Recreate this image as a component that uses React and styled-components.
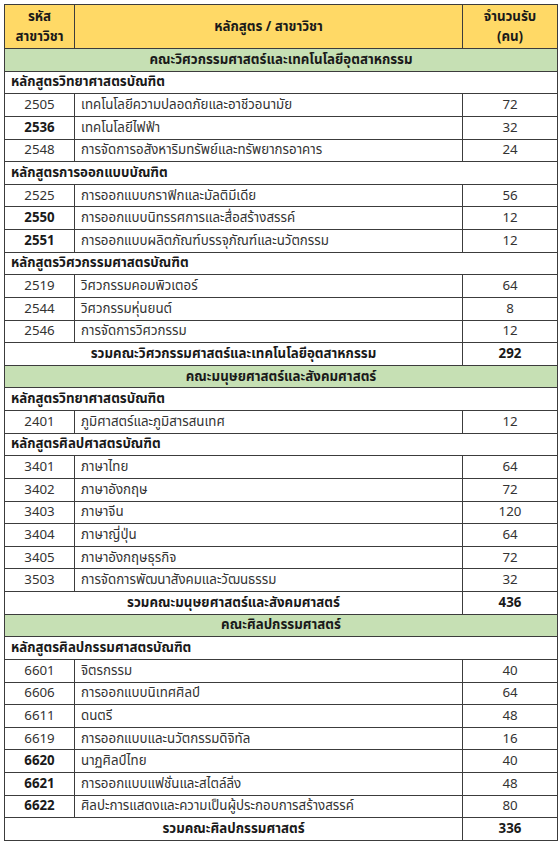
import React from "react";
import styled, { createGlobalStyle } from "styled-components";

const Global = createGlobalStyle`
  html, body { margin: 0; padding: 0; background: #ffffff; }
  body {
    font-family: Tahoma, "Noto Sans Thai", "Noto Sans", "DejaVu Sans", sans-serif;
    font-size: 13.3px;
    line-height: 18px;
    color: #333333;
  }
`;

const Page = styled.div`
  padding: 4px 3px 0 4px;
`;

const Table = styled.table`
  border-collapse: collapse;
  table-layout: fixed;
  width: 553px;
  border: 1.5px solid #8c8c8c;
`;

const Col = styled.col`
  width: ${(p) => p.$w}px;
`;

const Row = styled.tr`
  height: 22.63px;
`;

const HeadRow = styled.tr`
  height: 44px;
`;

const cellBase = `
  padding: 0;
  border: 1px solid #3c3c3c;
  line-height: 18px;
  vertical-align: middle;
`;

const HeadCell = styled.th`
  ${cellBase}
  background: #ffd966;
  color: #1a1a1a;
  font-weight: bold;
  text-align: center;
  line-height: 20px;
`;

const FacultyCell = styled.td`
  ${cellBase}
  background: #c6e0b4;
  color: #1a1a1a;
  font-weight: bold;
  text-align: center;
`;

const ProgramCell = styled.td`
  ${cellBase}
  color: #1a1a1a;
  font-weight: bold;
  text-align: left;
  padding-left: 6px;
`;

const CodeCell = styled.td`
  ${cellBase}
  text-align: center;
  font-weight: ${(p) => (p.$bold ? "bold" : "normal")};
  color: ${(p) => (p.$bold ? "#1a1a1a" : "#333333")};
`;

const NameCell = styled.td`
  ${cellBase}
  text-align: left;
  padding-left: 6px;
  white-space: nowrap;
  overflow: hidden;
`;

const SeatsCell = styled.td`
  ${cellBase}
  text-align: center;
`;

const TotalLabel = styled.td`
  ${cellBase}
  color: #1a1a1a;
  font-weight: bold;
  text-align: center;
`;

const TotalValue = styled(TotalLabel)``;

const faculties = [
  {
    name: "คณะวิศวกรรมศาสตร์และเทคโนโลยีอุตสาหกรรม",
    total: 292,
    programs: [
      {
        title: "หลักสูตรวิทยาศาสตรบัณฑิต",
        majors: [
          ["2505", "เทคโนโลยีความปลอดภัยและอาชีวอนามัย", 72],
          ["2536", "เทคโนโลยีไฟฟ้า", 32, true],
          ["2548", "การจัดการอสังหาริมทรัพย์และทรัพยากรอาคาร", 24],
        ],
      },
      {
        title: "หลักสูตรการออกแบบบัณฑิต",
        majors: [
          ["2525", "การออกแบบกราฟิกและมัลติมีเดีย", 56],
          ["2550", "การออกแบบนิทรรศการและสื่อสร้างสรรค์", 12, true],
          ["2551", "การออกแบบผลิตภัณฑ์บรรจุภัณฑ์และนวัตกรรม", 12, true],
        ],
      },
      {
        title: "หลักสูตรวิศวกรรมศาสตรบัณฑิต",
        majors: [
          ["2519", "วิศวกรรมคอมพิวเตอร์", 64],
          ["2544", "วิศวกรรมหุ่นยนต์", 8],
          ["2546", "การจัดการวิศวกรรม", 12],
        ],
      },
    ],
  },
  {
    name: "คณะมนุษยศาสตร์และสังคมศาสตร์",
    total: 436,
    programs: [
      {
        title: "หลักสูตรวิทยาศาสตรบัณฑิต",
        majors: [["2401", "ภูมิศาสตร์และภูมิสารสนเทศ", 12]],
      },
      {
        title: "หลักสูตรศิลปศาสตรบัณฑิต",
        majors: [
          ["3401", "ภาษาไทย", 64],
          ["3402", "ภาษาอังกฤษ", 72],
          ["3403", "ภาษาจีน", 120],
          ["3404", "ภาษาญี่ปุ่น", 64],
          ["3405", "ภาษาอังกฤษธุรกิจ", 72],
          ["3503", "การจัดการพัฒนาสังคมและวัฒนธรรม", 32],
        ],
      },
    ],
  },
  {
    name: "คณะศิลปกรรมศาสตร์",
    total: 336,
    programs: [
      {
        title: "หลักสูตรศิลปกรรมศาสตรบัณฑิต",
        majors: [
          ["6601", "จิตรกรรม", 40],
          ["6606", "การออกแบบนิเทศศิลป์", 64],
          ["6611", "ดนตรี", 48],
          ["6619", "การออกแบบและนวัตกรรมดิจิทัล", 16],
          ["6620", "นาฏศิลป์ไทย", 40, true],
          ["6621", "การออกแบบแฟชั่นและสไตล์ลิ่ง", 48, true],
          ["6622", "ศิลปะการแสดงและความเป็นผู้ประกอบการสร้างสรรค์", 80, true],
        ],
      },
    ],
  },
];

export default function App() {
  return (
    <>
      <Global />
      <Page>
        <Table>
          <colgroup>
            <Col $w={70} />
            <Col $w={388} />
            <Col $w={95} />
          </colgroup>
          <thead>
            <HeadRow>
              <HeadCell>
                รหัส
                <br />
                สาขาวิชา
              </HeadCell>
              <HeadCell>หลักสูตร / สาขาวิชา</HeadCell>
              <HeadCell>
                จำนวนรับ
                <br />
                (คน)
              </HeadCell>
            </HeadRow>
          </thead>
          <tbody>
            {faculties.map((f) => (
              <React.Fragment key={f.name}>
                <Row>
                  <FacultyCell colSpan={3}>{f.name}</FacultyCell>
                </Row>
                {f.programs.map((p) => (
                  <React.Fragment key={p.title + f.name}>
                    <Row>
                      <ProgramCell colSpan={3}>{p.title}</ProgramCell>
                    </Row>
                    {p.majors.map(([code, name, seats, bold]) => (
                      <Row key={code}>
                        <CodeCell $bold={bold}>{code}</CodeCell>
                        <NameCell>{name}</NameCell>
                        <SeatsCell>{seats}</SeatsCell>
                      </Row>
                    ))}
                  </React.Fragment>
                ))}
                <Row>
                  <TotalLabel colSpan={2}>รวม{f.name}</TotalLabel>
                  <TotalValue>{f.total}</TotalValue>
                </Row>
              </React.Fragment>
            ))}
          </tbody>
        </Table>
      </Page>
    </>
  );
}
